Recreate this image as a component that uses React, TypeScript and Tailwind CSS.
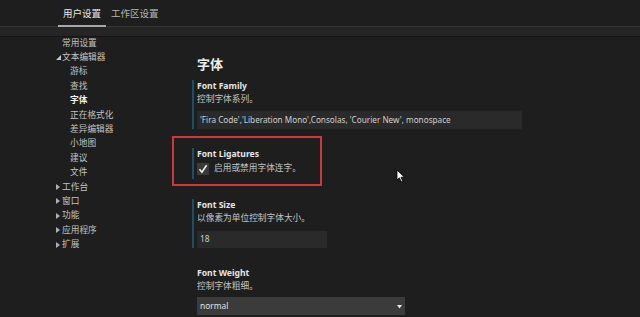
import React from "react";

const Down = () => (
  <svg width="5" height="5" viewBox="0 0 5 5" className="block">
    <polygon points="5,0 5,5 0,5" fill="#c5c5c5" />
  </svg>
);
const Right = () => (
  <svg width="4" height="6" viewBox="0 0 4 6" className="block">
    <polygon points="0,0 4,3 0,6" fill="#b0b0b0" />
  </svg>
);

type Item = { label: string; level: 0 | 1; arrow?: "down" | "right"; active?: boolean };

const items: Item[] = [
  { label: "常用设置", level: 0 },
  { label: "文本编辑器", level: 0, arrow: "down" },
  { label: "游标", level: 1 },
  { label: "查找", level: 1 },
  { label: "字体", level: 1, active: true },
  { label: "正在格式化", level: 1 },
  { label: "差异编辑器", level: 1 },
  { label: "小地图", level: 1 },
  { label: "建议", level: 1 },
  { label: "文件", level: 1 },
  { label: "工作台", level: 0, arrow: "right" },
  { label: "窗口", level: 0, arrow: "right" },
  { label: "功能", level: 0, arrow: "right" },
  { label: "应用程序", level: 0, arrow: "right" },
  { label: "扩展", level: 0, arrow: "right" },
];

export default function App() {
  return (
    <div className="w-[640px] h-[317px] bg-[#1e1e1e] overflow-hidden relative text-[#c8c8c8] font-['Noto_Sans','Noto_Sans_CJK_SC',sans-serif]">
      {/* header tabs */}
      <div className="h-[27px] flex items-end pl-[58px] border-b border-[#363636]">
        <div className="px-[5px] pb-[5px] text-[9.5px] leading-[12px] text-[#e8e8e8] border-b-2 border-[#a8a8a8] -mb-[1px]">
          用户设置
        </div>
        <div className="px-[5px] pb-[5px] text-[9.5px] leading-[12px] text-[#b4b4b4] border-b-2 border-transparent -mb-[1px]">
          工作区设置
        </div>
      </div>
      <div className="h-[10px] bg-[#252525] border-b border-[#151515]" />

      <div className="flex">
        {/* nav */}
        <div className="w-[192px] pl-[56px] -mt-[1px] shrink-0">
          {items.map((it) => (
            <div key={it.label} className="flex items-center h-[14.4px] text-[8.7px]">
              <div className="w-[6px] flex items-center justify-start">
                {it.arrow === "down" && <Down />}
                {it.arrow === "right" && <Right />}
              </div>
              <div
                className={
                  (it.level === 1 ? "pl-[8px] " : "") +
                  (it.active ? "font-bold text-[#f2f2f2]" : "text-[#c2c2c2]")
                }
              >
                {it.label}
              </div>
            </div>
          ))}
        </div>

        {/* content */}
        <div className="flex-1 pt-[18px]">
          <div className="pl-[5px] text-[13px] leading-[18px] font-bold text-[#eeeeee]">字体</div>

          <div className="mt-[7px] border-l-2 border-[#1c4f66] pl-[3px]">
            <div className="text-[8.6px] leading-[13px] font-bold text-[#e6e6e6]">Font Family</div>
            <div className="text-[8.7px] leading-[13px] text-[#c4c4c4]">控制字体系列。</div>
            <div className="mt-[5px] w-[325px] h-[18px] bg-[#2a2a2a] flex items-center pl-[3px] text-[8.2px] text-[#cfcfcf] whitespace-nowrap">
              'Fira Code','Liberation Mono',Consolas, 'Courier New', monospace
            </div>
          </div>

          <div className="mt-[19px] border-l-2 border-[#1c4f66] pl-[3px] pb-[4px]">
            <div className="text-[8.6px] leading-[13px] font-bold text-[#e6e6e6]">Font Ligatures</div>
            <div className="flex items-center mt-[1px]">
              <div className="w-[12px] h-[12px] bg-[#3a3a3a] flex items-center justify-center">
                <svg width="10" height="10" viewBox="0 0 10 10">
                  <path d="M1.5 5.2 L3.9 8.2 L8.6 1.2" fill="none" stroke="#f0f0f0" strokeWidth="1.6" />
                </svg>
              </div>
              <div className="ml-[5px] text-[8.7px] leading-[13px] text-[#c4c4c4]">启用或禁用字体连字。</div>
            </div>
          </div>

          <div className="mt-[20px] border-l-2 border-[#1c4f66] pl-[3px]">
            <div className="text-[8.6px] leading-[13px] font-bold text-[#e6e6e6]">Font Size</div>
            <div className="text-[8.7px] leading-[13px] text-[#c4c4c4]">以像素为单位控制字体大小。</div>
            <div className="mt-[6px] w-[130px] h-[17px] bg-[#2a2a2a] flex items-center pl-[3px] text-[8.4px] text-[#cfcfcf]">
              18
            </div>
          </div>

          <div className="mt-[19px] pl-[5px]">
            <div className="text-[8.6px] leading-[13px] font-bold text-[#e6e6e6]">Font Weight</div>
            <div className="text-[8.7px] leading-[13px] text-[#c4c4c4]">控制字体粗细。</div>
            <div className="mt-[4px] w-[208px] h-[18px] bg-[#3b3b3b] flex items-center justify-between pl-[3px] pr-[3px] text-[8.4px] text-[#e0e0e0]">
              <span>normal</span>
              <svg width="5" height="5" viewBox="0 0 5 5">
                <polygon points="0,1 5,1 2.5,4.5" fill="#e8e8e8" />
              </svg>
            </div>
          </div>
        </div>
      </div>

      {/* annotation box */}
      <div className="absolute left-[172px] top-[136px] w-[150px] h-[50px] border-2 border-[#c9393d]" />

      {/* mouse cursor */}
      <svg className="absolute left-[396px] top-[169px]" width="10" height="14" viewBox="0 0 10 14">
        <path d="M1 1 L1 11 L3.4 8.8 L5.2 12.8 L6.8 12.1 L5 8.2 L8.4 8.2 Z" fill="#ffffff" stroke="#000" strokeWidth="0.8" />
      </svg>
    </div>
  );
}
